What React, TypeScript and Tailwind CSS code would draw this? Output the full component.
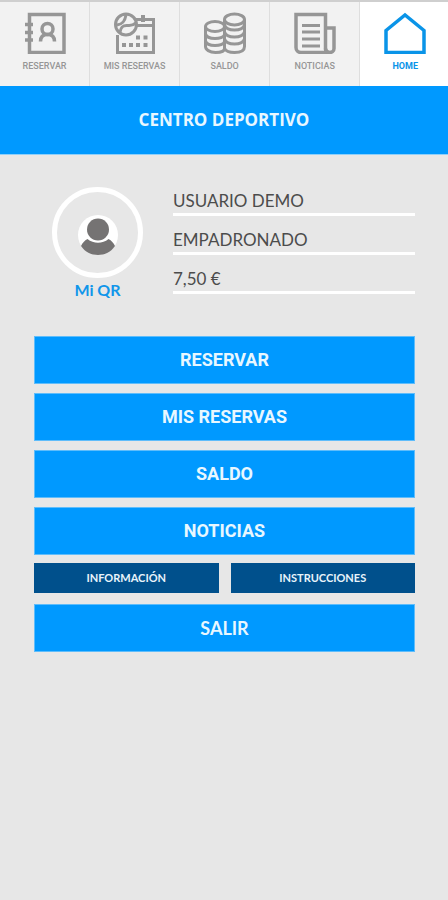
import type { ReactNode } from "react";

const svgProps = {
  viewBox: "0 0 42 42",
  fill: "none",
  stroke: "currentColor",
  strokeWidth: 3.5,
  className: "h-[42px] w-[42px]",
  "aria-hidden": true,
};

function AgendaIcon() {
  return (
    <svg {...svgProps}>
      <path d="M5.5 2.5H40v38H5.5z" />
      <path d="M1 12.5h8M1 20.5h8M1 28h8" strokeWidth={3.5} />
      <circle cx="23.5" cy="17" r="5.5" />
      <path d="M16.5 29.5c0-5 3-7 7-7s7 2 7 7" />
    </svg>
  );
}

function CalendarIcon() {
  return (
    <svg {...svgProps}>
      <path d="M3.5 23v17.5h36V7.5H21M22 13.5h17.5" strokeWidth={3} />
      <path d="M29 3v7" strokeWidth={4} />
      <circle cx="12" cy="12.5" r="10.5" fill="#f2f2f2" strokeWidth={3} />
      <path d="M3 13c6-1 8-4 9-10M6 20c1-6 4-7 8-6.500s6-1 8-2.500" strokeWidth={3} />
      <path d="M22 25.5h4M29.5 25.5h4M8 33h4M15 33h4M22 33h4M29.5 33h4" strokeWidth={4} />
    </svg>
  );
}

function CoinsIcon() {
  return (
    <svg {...svgProps} strokeWidth={3}>
      <ellipse cx="11" cy="14.5" rx="9.5" ry="5" />
      <path d="M1.5 14.5v20c0 3 4 6 10 6s9-2 9-4V7.5" />
      <path d="M1.5 22c1 3 5 4.5 9.5 4.5s8-1 9.5-3.5M1.5 29c1 3 5 4.5 9.5 4.5s8-1 9.5-3.5" />
      <ellipse cx="30.5" cy="7.5" rx="10" ry="5.5" />
      <path d="M40.5 7.5v27c0 4-4 6-10 6s-9-2-10-4" />
      <path d="M20.5 13c1 3 5 5 10 5s9-2 10-5M20.5 20c1 3 5 5 10 5s9-2 10-5M20.5 27c1 3 5 5 10 5s9-2 10-5" />
    </svg>
  );
}

function NewsIcon() {
  return (
    <svg {...svgProps}>
      <path d="M2 2.5h29.500V36c0 3 1.5 4.500 4 4.500H7c-3 0-5-2-5-5z" />
      <path d="M31.5 16H40v20.5c0 2.500-2 4-4.500 4s-4-1.500-4-4" />
      <path d="M8 13.5h18M8 20h18M8 27h18M8 34h18" strokeWidth={3} />
    </svg>
  );
}

function HomeIcon() {
  return (
    <svg {...svgProps}>
      <path d="M2 40.5V18.5L21 3l19 15.500v22z" />
    </svg>
  );
}

const TABS: { label: string; icon: ReactNode; active?: boolean }[] = [
  { label: "RESERVAR", icon: <AgendaIcon /> },
  { label: "MIS RESERVAS", icon: <CalendarIcon /> },
  { label: "SALDO", icon: <CoinsIcon /> },
  { label: "NOTICIAS", icon: <NewsIcon /> },
  { label: "HOME", icon: <HomeIcon />, active: true },
];

const FIELDS = ["USUARIO DEMO", "EMPADRONADO", "7,50 €"];

const ACTIONS = ["RESERVAR", "MIS RESERVAS", "SALDO", "NOTICIAS"];

function TopTabs() {
  return (
    <nav className="grid grid-cols-[repeat(5,20.1%)] overflow-hidden border-t-2 border-[#cfcfcf]">
      {TABS.map((t) => (
        <a
          key={t.label}
          href="#"
          className={`flex h-[84px] flex-col items-center pt-[10px] font-['Roboto',sans-serif] text-[9px] leading-[10px] whitespace-nowrap ${
            t.active
              ? "bg-white font-bold text-[#0a94e8]"
              : "border-r border-[#dedede] bg-[#f2f2f2] font-medium text-[#969696]"
          }`}
        >
          {t.icon}
          <span className="mt-[7px]">{t.label}</span>
        </a>
      ))}
    </nav>
  );
}

function Profile() {
  return (
    <section className="mt-8 mr-[33px] ml-[52px] flex gap-[30px]">
      <a
        href="#"
        className="flex shrink-0 flex-col items-center text-[16px] leading-6 font-bold text-[#1196ea]"
      >
        <span className="flex size-[91px] items-center justify-center rounded-full border-[5px] border-white">
          <svg viewBox="0 0 40 40" className="mt-1 size-10" aria-hidden="true">
            <circle cx="20" cy="20" r="20" fill="#fff" />
            <circle cx="20" cy="14.5" r="11" fill="#757373" />
            <path
              d="M9.5 24c6 5 15 5 21 0 3 1.5 5 4 6.500 7-4 6-10 9-17 9s-13-3-17-9c1.500-3 3.500-5.500 6.500-7z"
              fill="#757373"
            />
          </svg>
        </span>
        Mi QR
      </a>
      <ul className="flex-1 pt-0.5 text-[17px] leading-6 text-[#4c4c4c]">
        {FIELDS.map((f) => (
          <li key={f} className="mb-3 border-b-[3px] border-white">
            {f}
          </li>
        ))}
      </ul>
    </section>
  );
}

export default function App() {
  return (
    <div className="min-h-screen bg-[#e7e7e7] font-['Lato',sans-serif]">
      <TopTabs />
      <h1 className="flex h-[69px] items-center justify-center border-b border-[#8fd0fa] bg-[#0099ff] font-['Open_Sans',sans-serif] text-[17px] leading-6 font-bold text-[#e8f7ff]">
        CENTRO DEPORTIVO
      </h1>
      <Profile />
      <main className="mr-[33px] ml-[34px] flex flex-col">
        <div className="mt-[30px] flex flex-col gap-[9px]">
          {ACTIONS.map((a) => (
            <button
              key={a}
              type="button"
              className="h-12 border border-[#5fbdfb] bg-[#0099ff] font-['Roboto',sans-serif] text-[18px] leading-6 font-bold text-[#e8f7ff]"
            >
              {a}
            </button>
          ))}
        </div>
        <div className="mt-2 grid grid-cols-2 gap-3 text-[11px] font-bold text-[#e8f4fb]">
          <button type="button" className="h-[30px] bg-[#00508c]">
            INFORMACIÓN
          </button>
          <button type="button" className="h-[30px] bg-[#00508c]">
            INSTRUCCIONES
          </button>
        </div>
        <button
          type="button"
          className="mt-[11px] h-12 border border-[#5fbdfb] bg-[#0099ff] text-[18px] leading-6 font-bold text-[#e8f7ff]"
        >
          SALIR
        </button>
      </main>
    </div>
  );
}
